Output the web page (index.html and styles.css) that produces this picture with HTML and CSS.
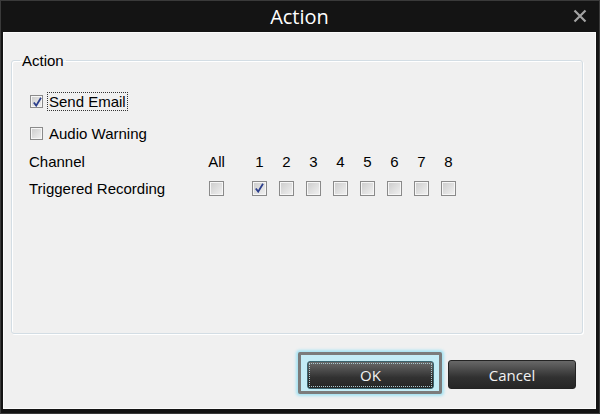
FILE: index.html
```html
<!DOCTYPE html>
<html lang="en">
<head>
    <meta charset="UTF-8">
    <title>Action</title>
    <link rel="stylesheet" href="styles.css">
</head>
<body>
    <div class="window">
        <div class="titlebar">
            <span class="title">Action</span>
            <span class="close">
                <svg width="14" height="14" viewBox="0 0 14 14"><path d="M1.5 1.5 L12.5 12.5 M12.5 1.5 L1.5 12.5" stroke="#a3a3a3" stroke-width="2.2" fill="none"/></svg>
            </span>
        </div>
        <div class="content">
            <fieldset class="group">
                <legend>Action</legend>
                <label class="option">
                    <span class="check checked"></span>
                    <span class="focus">Send Email</span>
                </label>
                <label class="option">
                    <span class="check"></span>
                    <span class="text">Audio Warning</span>
                </label>
                <div class="channels">
                    <span class="row-label">Channel</span>
                    <span class="cell"><span class="num">All</span></span>
                    <span class="cell"><span class="num">1</span></span>
                    <span class="cell"><span class="num">2</span></span>
                    <span class="cell"><span class="num">3</span></span>
                    <span class="cell"><span class="num">4</span></span>
                    <span class="cell"><span class="num">5</span></span>
                    <span class="cell"><span class="num">6</span></span>
                    <span class="cell"><span class="num">7</span></span>
                    <span class="cell"><span class="num">8</span></span>

                    <span class="row-label">Triggered Recording</span>
                    <span class="cell"><span class="check box"></span></span>
                    <span class="cell"><span class="check box checked"></span></span>
                    <span class="cell"><span class="check box"></span></span>
                    <span class="cell"><span class="check box"></span></span>
                    <span class="cell"><span class="check box"></span></span>
                    <span class="cell"><span class="check box"></span></span>
                    <span class="cell"><span class="check box"></span></span>
                    <span class="cell"><span class="check box"></span></span>
                    <span class="cell"><span class="check box"></span></span>
                </div>
            </fieldset>
            <div class="buttons">
                <div class="default-ring">
                    <button class="btn"><span class="btn-focus">OK</span></button>
                </div>
                <button class="btn cancel">Cancel</button>
            </div>
        </div>
    </div>
</body>
</html>
```

FILE: styles.css
```css
body {
    margin: 0;
    background: #1b1b1b;
    font-family: "Liberation Sans", Arial, sans-serif;
}
.window {
    width: 600px;
    height: 414px;
    box-sizing: border-box;
    background: #141414;
    border: 1px solid #3a3a3a;
    padding: 0 3px 4px 2px;
    display: flex;
    flex-direction: column;
}
.titlebar {
    height: 31px;
    display: flex;
    align-items: center;
    justify-content: center;
    position: relative;
}
.title {
    color: #ffffff;
    font-family: "Open Sans", "Noto Sans", sans-serif;
    font-size: 20px;
    margin-top: -1px;
}
.close {
    position: absolute;
    right: 9px;
    top: 8px;
    height: 14px;
}
.content {
    flex: 1;
    background: #f0f0f0;
    border: 1px solid #fbfbfb;
    padding: 0 12px 0 7px;
}
.group {
    margin: 19px 0 0 0;
    height: 282px;
    box-sizing: border-box;
    border: 1px solid #d3dde4;
    box-shadow: inset 1px 1px 0 #ffffff, 1px 1px 0 #ffffff;
    border-radius: 3px;
    padding: 0 0 0 17px;
}
.group legend {
    font-size: 15px;
    color: #000;
    padding: 0 2px;
    margin-left: -9px;
}
.option {
    display: flex;
    align-items: center;
    height: 20px;
    font-size: 15px;
    color: #000;
    margin-left: 1px;
}
.option:first-of-type {
    margin-top: 22px;
}
.option + .option {
    margin-top: 12px;
}
.check {
    width: 11px;
    height: 11px;
    border: 1px solid #8a8a8a;
    background: linear-gradient(135deg, #cbcbcb, #f2f2f2);
    box-shadow: inset 0 0 0 1px #f6f6f6;
    flex-shrink: 0;
    position: relative;
}
.check.checked::after {
    content: "";
    position: absolute;
    left: 2px;
    top: 1px;
    width: 9px;
    height: 10px;
    background: url("data:image/svg+xml,%3Csvg xmlns='http://www.w3.org/2000/svg' width='9' height='10'%3E%3Cpath d='M0.8 5.5 L3.2 8.6 L8 0.8' stroke='%232c3f8c' stroke-width='1.8' fill='none'/%3E%3C/svg%3E") no-repeat;
}
.check.box {
    width: 13px;
    height: 13px;
}
.focus,
.text {
    margin-left: 5px;
    padding: 0 1px;
    line-height: 17px;
}
.focus {
    outline: 1px dotted #333;
}
.channels {
    display: grid;
    grid-template-columns: 180px 43px repeat(8, 27px);
    grid-auto-rows: 27px;
    align-items: center;
    margin-top: 5px;
    font-size: 15px;
    color: #000;
}
.cell {
    width: 15px;
    display: flex;
    justify-content: center;
}
.num {
    white-space: nowrap;
}
.buttons {
    display: flex;
    justify-content: flex-end;
    align-items: flex-start;
    gap: 6px;
    margin-top: 18px;
    padding-right: 7px;
}
.default-ring {
    border: 3px solid #7b7b7b;
    border-radius: 2px;
    padding: 6px 5px 2px 6px;
    background: #c4ecf6;
    box-shadow: 0 0 3px 2px #a6e3f3;
}
.btn {
    width: 128px;
    height: 29px;
    border: 1px solid #232323;
    border-radius: 3px;
    background: linear-gradient(#686868, #313131 60%, #262626);
    color: #f2f2f2;
    font-family: "Open Sans", "Noto Sans", sans-serif;
    font-size: 15px;
    padding: 0;
}
.cancel {
    margin-top: 8px;
}
.default-ring .btn {
    border-color: #3a6570;
    width: 127px;
    height: 28px;
    display: flex;
    padding: 2px;
}
.btn-focus {
    flex: 1;
    outline: 1px dotted #a8c8cf;
    display: flex;
    align-items: center;
    justify-content: center;
}
```
